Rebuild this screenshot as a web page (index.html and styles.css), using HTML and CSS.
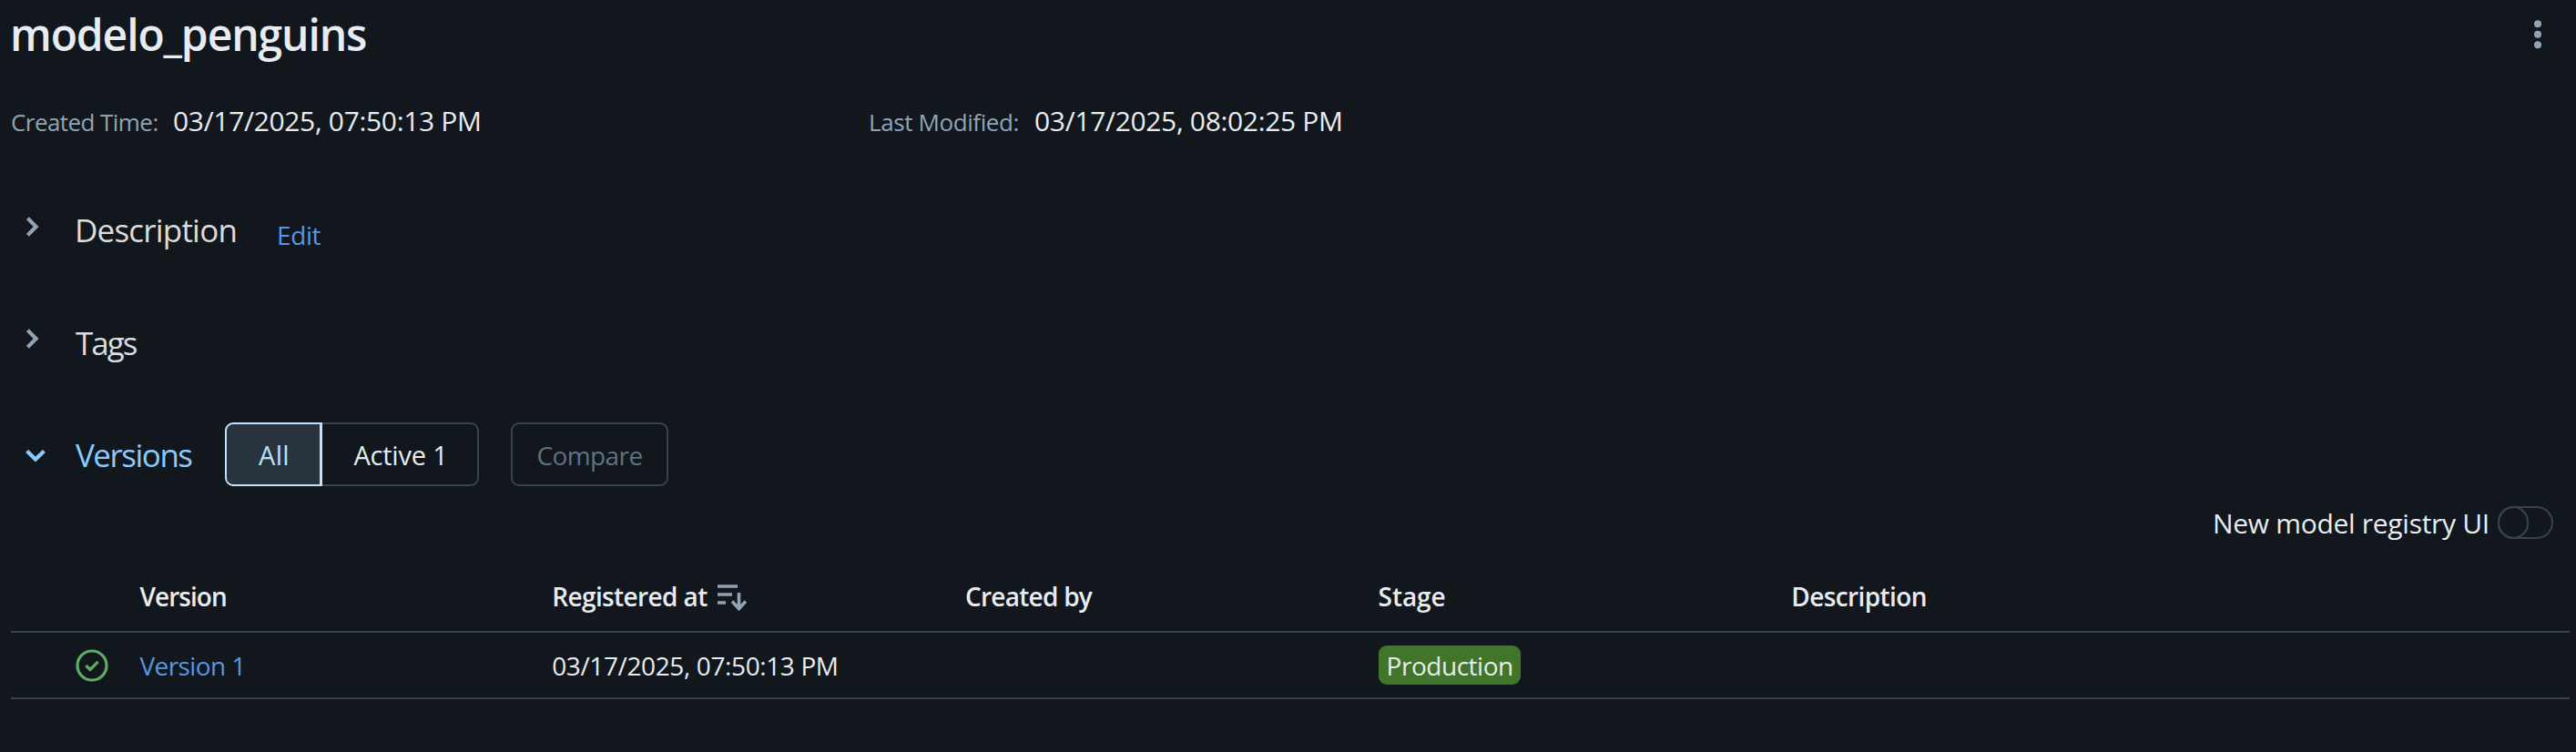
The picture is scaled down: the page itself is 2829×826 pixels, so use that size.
FILE: index.html
```html
<!DOCTYPE html>
<html lang="en">
<head>
<meta charset="utf-8">
<title>modelo_penguins</title>
<link rel="stylesheet" href="styles.css">
</head>
<body>
<main class="page">
  <header class="page-header">
    <h1 class="title">modelo_penguins</h1>
    <svg class="kebab" width="8" height="32" viewBox="0 0 8 32" fill="currentColor"><circle cx="4" cy="4.2" r="4"/><circle cx="4" cy="15.8" r="4"/><circle cx="4" cy="27.3" r="4"/></svg>
  </header>

  <div class="meta">
    <div class="meta-item"><span class="meta-label created">Created Time:</span><span class="meta-value">03/17/2025, 07:50:13 PM</span></div>
    <div class="meta-item"><span class="meta-label modified">Last Modified:</span><span class="meta-value">03/17/2025, 08:02:25 PM</span></div>
  </div>

  <section class="section description">
    <svg class="chevron" width="14" height="22" viewBox="0 0 14 22" fill="none" stroke="currentColor" stroke-width="4.2"><path d="M1.400 1.600 10.600 11 1.400 20.400"/></svg>
    <h2 class="section-title">Description</h2>
    <a class="edit">Edit</a>
  </section>

  <section class="section tags">
    <svg class="chevron" width="14" height="22" viewBox="0 0 14 22" fill="none" stroke="currentColor" stroke-width="4.2"><path d="M1.400 1.600 10.600 11 1.400 20.400"/></svg>
    <h2 class="section-title">Tags</h2>
  </section>

  <section class="section versions">
    <svg class="chevron open" width="22" height="14" viewBox="0 0 22 14" fill="none" stroke="currentColor" stroke-width="4.2"><path d="M1.600 1.400 11 10.600 20.400 1.400"/></svg>
    <h2 class="section-title">Versions</h2>
    <div class="segmented">
      <button class="segment all">All</button>
      <button class="segment active-count">Active 1</button>
    </div>
    <button class="compare">Compare</button>
  </section>

  <div class="registry-toggle">
    <span class="toggle-label">New model registry UI</span>
    <span class="switch"><span class="knob"></span></span>
  </div>

  <div class="table">
    <div class="row head">
      <span></span>
      <span class="h-version">Version</span>
      <span class="h-registered">Registered at
        <svg class="sort" width="32" height="30" viewBox="0 0 32 30" fill="none" stroke="currentColor" stroke-width="3.6"><path d="M0 2H22M0 11H16M0 20H9M23.500 9V27M16 18.500 23.500 26.500 31 18.500"/></svg></span>
      <span class="h-created">Created by</span>
      <span class="h-stage">Stage</span>
      <span class="h-description">Description</span>
    </div>
    <div class="row body">
      <span class="status"><svg width="36" height="36" viewBox="0 0 36 36" fill="none" stroke="currentColor" stroke-width="3.2"><circle cx="18" cy="18" r="16"/><path d="M11.300 18 16 22.500 24.600 13.800"/></svg></span>
      <a class="version-link">Version 1</a>
      <span class="date">03/17/2025, 07:50:13 PM</span>
      <span></span>
      <span><span class="stage-tag">Production</span></span>
      <span></span>
    </div>
  </div>
</main>
</body>
</html>
```
FILE: styles.css
```css
* { box-sizing: border-box; }

body {
  margin: 0;
  background: #11171c;
  color: #e8ecf0;
  font-family: "Open Sans", "Noto Sans", sans-serif;
}

.page {
  height: 826px;
  padding: 7px 7px 0 12px;
  display: flex;
  flex-direction: column;
  overflow: hidden;
}

h1, h2 { margin: 0; }

.page-header {
  height: 60px;
  display: flex;
  justify-content: space-between;
  padding-right: 31.500px;
}

.title {
  margin-left: -1px;
  font-size: 48px;
  font-weight: 600;
  line-height: 62px;
  letter-spacing: -1.12px;
}

.kebab { margin-top: 15px; color: #92a4b3; }

.meta {
  display: grid;
  grid-template-columns: 942px 1fr;
  height: 40px;
  margin-top: 45px;
}

.meta-item {
  display: flex;
  align-items: baseline;
  gap: 17px;
  line-height: 42px;
}

.meta-label { font-size: 26px; color: #92a4b3; }
.created { width: 161px; letter-spacing: -.56px; white-space: nowrap; }
.modified { width: 165px; letter-spacing: -.4px; white-space: nowrap; }
.meta-value { font-size: 30px; letter-spacing: -.33px; }

.section { display: flex; align-items: center; height: 50px; }

.section-title {
  width: 180px;
  font-size: 35px;
  font-weight: 400;
  line-height: 50px;
  padding-top: 2px;
  color: #dcdcdc;
}

.chevron { flex: none; margin: 0 39px 7px 17px; color: #92a4b3; }

.description { margin-top: 75px; }
.description .section-title { letter-spacing: -.8px; }
.edit {
  margin: 11px 0 0 42px;
  font-size: 28px;
  letter-spacing: -.4px;
  color: #5996e0;
}

.tags { margin-top: 74px; }
.tags .chevron { margin-right: 40px; margin-bottom: 8px; }
.tags .section-title { letter-spacing: -2px; }

.versions { height: 70px; margin-top: 63px; }
.versions .section-title { width: 130px; letter-spacing: -1.5px; color: #8acaff; }
.versions .chevron { margin: 4px 33px 0 16px; color: #8acaff; }

.segmented { display: flex; margin-left: 34px; height: 70px; }

button {
  padding: 1px 0 0;
  border: 2px solid #37444f;
  background: transparent;
  color: #e8ecf0;
  font: 29px/60px "Open Sans", "Noto Sans", sans-serif;
}

.segment.all {
  width: 107px;
  height: 70px;
  padding-left: 2px;
  border-color: #c2e1fb;
  border-right-width: 3px;
  border-radius: 9px 0 0 9px;
  background: #28333e;
  color: #bae1fc;
  letter-spacing: .3px;
}

.active-count {
  width: 172px;
  padding-left: 2px;
  border-left: 0;
  border-radius: 0 9px 9px 0;
  letter-spacing: -.2px;
}

.compare {
  width: 173px;
  height: 70px;
  margin-left: 35px;
  border-radius: 9px;
  font-size: 28px;
  letter-spacing: -.6px;
  color: #5f7281;
}

.registry-toggle {
  height: 36px;
  margin-top: 22px;
  padding-right: 18px;
  display: flex;
  justify-content: flex-end;
}

.toggle-label {
  width: 313px;
  font-size: 30px;
  line-height: 37px;
  letter-spacing: -.3px;
  white-space: nowrap;
}

.switch {
  width: 61px;
  height: 36px;
  border: 2px solid #37444f;
  border-radius: 18px;
}

.knob {
  display: block;
  width: 34px;
  height: 36px;
  margin: -2px 0 0 -2px;
  border: 2px solid #37444f;
  border-radius: 18px;
}

.table { margin-top: 25px; font-size: 28px; }

.row {
  display: grid;
  grid-template-columns: 140.500px repeat(4, 453.700px) 1fr;
  align-items: center;
  border-bottom: 2px solid #37444f;
}

.head { height: 78px; font-weight: 600; }
.body { height: 73px; }

.h-version { padding-left: 1px; letter-spacing: -.95px; }
.h-registered { display: flex; align-items: center; gap: 11px; letter-spacing: -.61px; }
.h-created { letter-spacing: -.73px; }
.h-stage { letter-spacing: -.06px; }
.h-description { letter-spacing: -.6px; }
.sort { margin-top: 3px; color: #92a4b3; }

.status { display: flex; padding-left: 70.500px; margin-top: 1px; color: #5fac66; }
.version-link { padding-left: 1px; letter-spacing: -.6px; color: #5996e0; }
.date { letter-spacing: -.38px; }

.stage-tag {
  display: block;
  width: 156px;
  height: 43px;
  padding-left: 9px;
  border-radius: 9px;
  background: #41752a;
  line-height: 44px;
  letter-spacing: -.47px;
}
```
